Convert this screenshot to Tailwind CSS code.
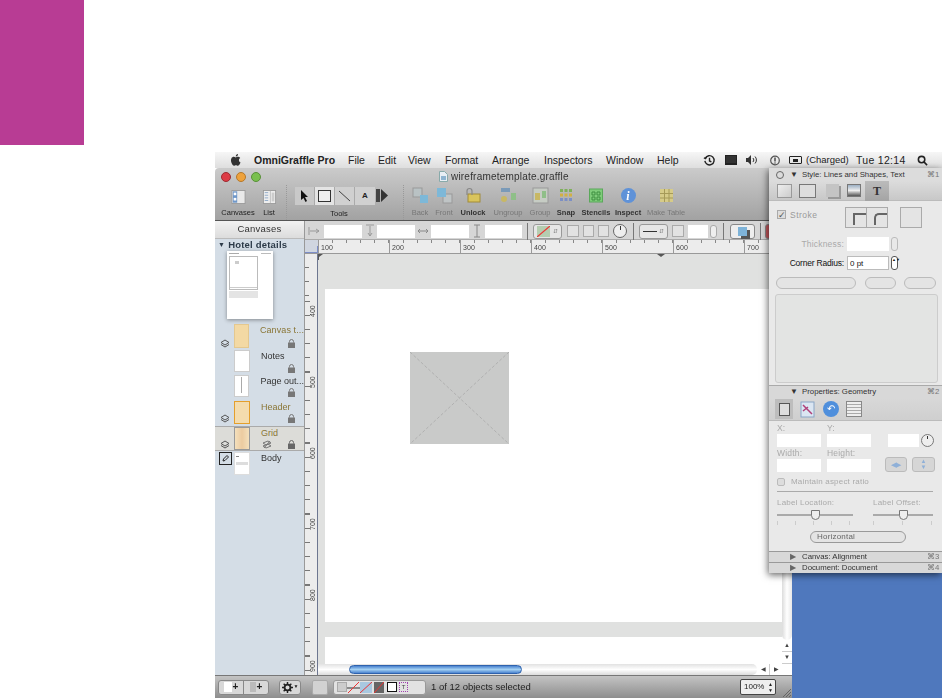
<!DOCTYPE html>
<html lang="en">
<head>
<meta charset="utf-8">
<title>OmniGraffle Pro</title>
<script src="https://cdn.jsdelivr.net/npm/@tailwindcss/browser@4"></script>
</head>
<body class="bg-white overflow-hidden font-['Liberation_Sans',sans-serif] text-[#222]">
<div class="w-[942px] h-[698px] flex flex-col overflow-hidden">
  <div class="w-[84px] h-[145px] shrink-0 bg-[#b83c94]"></div>
  <div class="relative ml-[215px] mt-[7px] w-[727px] h-[546px] flex flex-col blur-[0.35px]">
    <!-- menu bar -->
    <div class="h-[16px] shrink-0 flex items-center bg-gradient-to-b from-[#f6f6f6] to-[#dedede] text-[10.5px] leading-none">
      <svg class="ml-[14px] w-[14px] h-[14px]" viewBox="0 0 24 24" fill="#333"><path d="M17 12.500c0-2.600 2.100-3.800 2.200-3.900-1.200-1.800-3.100-2-3.700-2-1.600-.2-3.100.9-3.900.9s-2-.9-3.300-.9c-1.700 0-3.300 1-4.100 2.500-1.800 3-.5 7.600 1.200 10.100.9 1.200 1.900 2.600 3.200 2.500 1.300 0 1.800-.8 3.300-.8s2 .8 3.300.8c1.400 0 2.300-1.200 3.100-2.500 1-1.400 1.400-2.800 1.400-2.900-.100 0-2.700-1-2.700-3.800zM14.500 4.900c.7-.9 1.200-2 1-3.200-1 0-2.200.7-2.900 1.500-.6.700-1.200 1.900-1 3 1.100.1 2.200-.5 2.900-1.300z"/></svg>
      <span class="ml-[11px] w-[94px] font-bold text-[10.5px]">OmniGraffle Pro</span>
      <span class="w-[30px]">File</span>
      <span class="w-[30px]">Edit</span>
      <span class="w-[37px]">View</span>
      <span class="w-[47px]">Format</span>
      <span class="w-[52px]">Arrange</span>
      <span class="w-[62px]">Inspectors</span>
      <span class="w-[51px]">Window</span>
      <span class="w-[46px]">Help</span>
      <svg class="w-[13px] h-[13px] mr-[9px]" viewBox="0 0 14 14" fill="none" stroke="#222" stroke-width="1.500"><path d="M2.500 4.500A5 5 0 1 1 2 7.500M1 4l1.500 1L4 3.500M7 4v3.500l2 1"/></svg>
      <span class="w-[12px] h-[10px] bg-[#333] border border-[#222] border-b-[2px] mr-[9px]"></span>
      <svg class="w-[11px] h-[10px] mr-[13px]" viewBox="0 0 11 10" fill="#333"><path d="M0 3h2l3-3v10L2 7H0z"/><path d="M7 3a3 3 0 0 1 0 4M9 1.500a5 5 0 0 1 0 7" fill="none" stroke="#333"/></svg>
      <svg class="w-[10px] h-[11px] mr-[9px]" viewBox="0 0 10 11"><circle cx="5" cy="5.500" r="4.300" fill="none" stroke="#555" stroke-width="1.200"/><path d="M5 2.500v4M5 7.500v1" stroke="#333" stroke-width="1.300"/></svg>
      <span class="w-[13px] h-[8px] rounded-[1px] border border-[#222] flex items-center justify-center mr-[4px]"><span class="w-[5px] h-[3px] bg-[#222]"></span></span>
      <span class="text-[9.5px] w-[50px]">(Charged)</span>
      <span class="w-[61px] tracking-[0.3px]">Tue 12:14</span>
      <svg class="w-[11px] h-[11px]" viewBox="0 0 12 12" fill="none" stroke="#222" stroke-width="1.700"><circle cx="5" cy="5" r="3.500"/><path d="M7.500 7.500L11 11"/></svg>
    </div>
    <!-- work area -->
    <div class="flex flex-1 min-h-0">
      <div class="w-[577px] shrink-0 flex flex-col min-h-0">
        <!-- title bar + toolbar -->
        <div class="h-[53px] shrink-0 flex flex-col bg-gradient-to-b from-[#cbcbcb] to-[#a2a2a2] border-b border-[#555] rounded-t-[4px]">
          <div class="h-[17px] shrink-0 flex items-center relative">
            <span class="ml-[6px] w-[10px] h-[10px] rounded-full bg-[#dd3b45] border border-[#9c2a30]"></span>
            <span class="ml-[5px] w-[10px] h-[10px] rounded-full bg-[#eea23c] border border-[#b4772a]"></span>
            <span class="ml-[5px] w-[10px] h-[10px] rounded-full bg-[#7ac04f] border border-[#588f38]"></span>
            <svg class="ml-[178px] w-[9px] h-[11px]" viewBox="0 0 9 11"><path d="M.5.500h5l3 3v7h-8z" fill="#e8eef4" stroke="#8aa"/><path d="M2 5h5v4H2z" fill="#8fb4d0"/></svg>
            <span class="ml-[3px] text-[10px] tracking-[0.2px] text-[#333]">wireframetemplate.graffle</span>
          </div>
          <div class="flex flex-1 pl-[9px] text-[7.500px] leading-none">
            <div class="w-[28px] flex flex-col items-center">
              <svg class="w-[15px] h-[14px] mt-[5px]" viewBox="0 0 16 16"><rect x=".5" y=".5" width="15" height="15" fill="#e9e9e9" stroke="#999"/><rect x="1.500" y="1.500" width="5" height="13" fill="#6f97c8"/><rect x="2.500" y="3" width="3" height="3" fill="#fff"/><rect x="2.500" y="9" width="3" height="3" fill="#fff"/></svg>
              <span class="mt-[5px] whitespace-nowrap">Canvases</span>
            </div>
            <div class="w-[22px] ml-[6px] flex flex-col items-center">
              <svg class="w-[15px] h-[14px] mt-[5px]" viewBox="0 0 15 16"><rect x=".5" y=".5" width="14" height="15" fill="#eee" stroke="#999"/><path d="M2 3h4M2 6h4M2 9h4M2 12h4" stroke="#8aa6c6"/><path d="M8.500 1v14" stroke="#bbb"/><rect x="10" y="3" width="3" height="10" fill="#ccc"/></svg>
              <span class="mt-[5px]">List</span>
            </div>
            <div class="w-px ml-[6px] h-[35px] border-l border-dotted border-[#999]"></div>
            <div class="w-[93px] ml-[8px] flex flex-col">
              <div class="flex h-[19px] mt-[1px] items-center">
                <div class="w-[20px] h-[18px] bg-[#c9c9c9] flex items-center justify-center border-r border-[#aaa]"><svg class="w-[8px] h-[12px]" viewBox="0 0 8 12"><path d="M0 0l7 7H4l2 4-1.500 1L2.500 8 0 10z" fill="#111"/></svg></div>
                <div class="w-[20px] h-[18px] bg-[#e4e4e4] flex items-center justify-center border-r border-[#aaa]"><span class="w-[13px] h-[12px] border border-[#333] bg-[#eee]"></span></div>
                <div class="w-[20px] h-[18px] bg-[#d0d0d0] flex items-center justify-center border-r border-[#aaa]"><svg class="w-[14px] h-[12px]" viewBox="0 0 14 12"><path d="M1 1l11 10" stroke="#444"/></svg></div>
                <div class="w-[20px] h-[18px] bg-[#d0d0d0] flex items-center justify-center font-bold text-[8px]">A</div>
                <svg class="ml-[1px] w-[12px] h-[13px]" viewBox="0 0 12 13"><rect width="4" height="13" fill="#444"/><path d="M5 0l7 6.500-7 6.500z" fill="#333"/></svg>
              </div>
              <span class="mt-[5px] text-center pr-[5px]">Tools</span>
            </div>
            <div class="w-px ml-[15px] h-[35px] border-l border-dotted border-[#999]"></div>
            <div class="w-[32px] flex flex-col items-center text-[#777]">
              <svg class="w-[17px] h-[17px] mt-[2px]" viewBox="0 0 17 17"><rect x="1" y="1" width="9" height="9" fill="#b9c2c4" stroke="#999"/><rect x="8" y="8" width="8" height="8" fill="#7db8d8"/></svg>
              <span class="mt-[5px]">Back</span>
            </div>
            <div class="w-[16px] flex flex-col items-center text-[#777]">
              <svg class="w-[17px] h-[17px] mt-[2px] shrink-0" viewBox="0 0 17 17"><rect x="7" y="7" width="9" height="9" fill="#bfc4c5" stroke="#999"/><rect x="1" y="1" width="9" height="9" fill="#7db8d8"/></svg>
              <span class="mt-[5px] whitespace-nowrap">Front</span>
            </div>
            <div class="w-[42px] flex flex-col items-center font-bold text-[#333]">
              <svg class="w-[15px] h-[17px] mt-[2px]" viewBox="0 0 15 17"><rect x="2" y="7" width="12" height="8" fill="#d9c45c" stroke="#a28c38"/><path d="M1 8V4a2.500 2.500 0 0 1 5 0v4" fill="none" stroke="#888" stroke-width="1.200"/></svg>
              <span class="mt-[5px]">Unlock</span>
            </div>
            <div class="w-[28px] flex flex-col items-center text-[#777]">
              <svg class="w-[17px] h-[17px] mt-[2px] shrink-0" viewBox="0 0 17 17"><rect x="1" y="1" width="9" height="4" fill="#7a9ab8"/><circle cx="4" cy="12" r="3" fill="#c8b864"/><rect x="11" y="6" width="5" height="7" fill="#8fbf88"/></svg>
              <span class="mt-[5px] whitespace-nowrap">Ungroup</span>
            </div>
            <div class="w-[36px] flex flex-col items-center text-[#777]">
              <svg class="w-[17px] h-[17px] mt-[2px]" viewBox="0 0 17 17"><rect x="1" y="1" width="15" height="15" fill="#c6ccc4" stroke="#999"/><rect x="3" y="6" width="5" height="7" fill="#c8b864"/><rect x="10" y="4" width="4" height="7" fill="#8fbf88"/></svg>
              <span class="mt-[5px]">Group</span>
            </div>
            <div class="w-[16px] flex flex-col items-center font-bold text-[#333]">
              <svg class="w-[14px] h-[17px] mt-[2px] shrink-0" viewBox="0 0 14 17"><g fill="#7fb05a"><rect x="1" y="2" width="3" height="3"/><rect x="5.500" y="2" width="3" height="3"/><rect x="10" y="2" width="3" height="3"/></g><g fill="#d2b045"><rect x="1" y="6.500" width="3" height="3"/><rect x="5.500" y="6.500" width="3" height="3"/><rect x="10" y="6.500" width="3" height="3"/></g><g fill="#7c8fc4"><rect x="1" y="11" width="3" height="3"/><rect x="5.500" y="11" width="3" height="3"/><rect x="10" y="11" width="3" height="3"/></g></svg>
              <span class="mt-[5px]">Snap</span>
            </div>
            <div class="w-[44px] flex flex-col items-center font-bold text-[#333]">
              <svg class="w-[14px] h-[17px] mt-[2px]" viewBox="0 0 14 17"><rect x=".5" y="2" width="13" height="13" fill="#7fcc7a" stroke="#5aa85a"/><path d="M3 5h3v3H3zM8 5h3v3H8zM3 10h3v3H3zM8 10h3v3H8z" fill="none" stroke="#3f8f40"/></svg>
              <span class="mt-[5px]">Stencils</span>
            </div>
            <div class="w-[20px] flex flex-col items-center font-bold text-[#333]">
              <div class="w-[15px] h-[15px] mt-[3px] rounded-full bg-[#5f92d8] shrink-0 flex items-center justify-center text-white font-['Liberation_Serif',serif] italic text-[12px]">i</div>
              <span class="mt-[6px] whitespace-nowrap">Inspect</span>
            </div>
            <div class="w-[56px] flex flex-col items-center text-[#777]">
              <svg class="w-[17px] h-[17px] mt-[2px]" viewBox="0 0 17 17"><rect x="2" y="2" width="13" height="13" fill="#d6cb88"/><path d="M2 6.500h13M2 11h13M6.500 2v13M11 2v13" stroke="#a69a58"/></svg>
              <span class="mt-[5px] whitespace-nowrap">Make Table</span>
            </div>
          </div>
        </div>
        <!-- main -->
        <div class="flex flex-1 min-h-0">
          <!-- sidebar -->
          <div class="w-[90px] shrink-0 flex flex-col bg-[#d4dde6] border-r border-[#999]">
            <div class="h-[18px] shrink-0 flex items-center justify-center text-[9.500px] bg-gradient-to-b from-[#f2f2f2] to-[#dcdcdc] border-b border-[#bbb] tracking-[0.2px] text-[#333]">Canvases</div>
            <div class="h-[12px] flex items-center pl-[3px] text-[9.500px] font-bold tracking-[0.2px] text-[#2c3a48]"><span class="text-[7px] mr-[3px]">▼</span>Hotel details</div>
            <div class="ml-[12px] w-[46px] h-[68px] bg-white shadow-[0_1px_4px_#0006] flex flex-col p-[2px]">
              <div class="flex justify-between"><span class="w-[10px] h-px bg-[#aaa]"></span><span class="w-[10px] h-px bg-[#bbb]"></span></div>
              <div class="mt-[2px] border border-[#bbb] w-[29px] h-[34px] flex flex-col"><span class="mt-[4px] ml-[5px] w-[4px] h-[3px] bg-[#ccc]"></span><span class="mt-auto mb-[1px] w-full h-px bg-[#ccc]"></span></div>
              <div class="mt-[1px] w-[29px] h-[7px] bg-[#e4e4e4]"></div>
            </div>
            <div class="relative h-[26px] mt-[5px] pl-[19px] flex">
              <span class="w-[16px] h-[24px] bg-[#f3d9a4] border border-[#e4c88f]"></span>
              <span class="ml-[11px] text-[9px] leading-[13px] text-[#8a7636] whitespace-nowrap tracking-[0.1px]">Canvas t...</span>
              <svg class="absolute left-[5px] top-[15px] w-[10px] h-[9px]" viewBox="0 0 10 9" fill="none" stroke="#555"><path d="M5 1l4 2.500L5 6 1 3.500zM1 5.500L5 8l4-2.500"/></svg>
              <svg class="absolute left-[73px] top-[15px] w-[7px] h-[9px]" viewBox="0 0 7 9" fill="#777"><rect y="3.500" width="7" height="5.500"/><path d="M1.500 3.500V2.500a2 2 0 0 1 4 0v1" fill="none" stroke="#777"/></svg>
            </div>
            <div class="relative h-[23px] pl-[19px] flex">
              <span class="w-[16px] h-[22px] bg-white border border-[#ccc]"></span>
              <span class="ml-[11px] text-[9px] leading-[13px] text-[#333]">Notes</span>
              <svg class="absolute left-[73px] top-[14px] w-[7px] h-[9px]" viewBox="0 0 7 9" fill="#777"><rect y="3.500" width="7" height="5.500"/><path d="M1.500 3.500V2.500a2 2 0 0 1 4 0v1" fill="none" stroke="#777"/></svg>
            </div>
            <div class="relative h-[26px] mt-[2px] pl-[19px] flex">
              <span class="w-[16px] h-[22px] bg-white border border-[#ccc] flex justify-center"><span class="w-px h-[16px] mt-[1px] bg-[#aaa]"></span></span>
              <span class="ml-[11px] text-[9px] leading-[13px] text-[#333] whitespace-nowrap">Page out...</span>
              <svg class="absolute left-[73px] top-[13px] w-[7px] h-[9px]" viewBox="0 0 7 9" fill="#777"><rect y="3.500" width="7" height="5.500"/><path d="M1.500 3.500V2.500a2 2 0 0 1 4 0v1" fill="none" stroke="#777"/></svg>
            </div>
            <div class="relative h-[25px] pl-[19px] flex">
              <span class="w-[16px] h-[23px] bg-[#f4dcae] border border-[#e49f2c]"></span>
              <span class="ml-[11px] text-[9px] leading-[13px] text-[#8a7636]">Header</span>
              <svg class="absolute left-[5px] top-[13px] w-[10px] h-[9px]" viewBox="0 0 10 9" fill="none" stroke="#555"><path d="M5 1l4 2.500L5 6 1 3.500zM1 5.500L5 8l4-2.500"/></svg>
              <svg class="absolute left-[73px] top-[13px] w-[7px] h-[9px]" viewBox="0 0 7 9" fill="#777"><rect y="3.500" width="7" height="5.500"/><path d="M1.500 3.500V2.500a2 2 0 0 1 4 0v1" fill="none" stroke="#777"/></svg>
            </div>
            <div class="relative h-[25px] pl-[19px] flex items-center bg-[#dcdcd8] border-y border-[#aaa]">
              <span class="w-[16px] h-[23px] bg-gradient-to-r from-[#f4e0bc] via-[#eccba0] to-[#f4e0bc] border border-[#999]"></span>
              <span class="ml-[11px] text-[9px] leading-[13px] self-start text-[#8a7636]">Grid</span>
              <svg class="absolute left-[5px] top-[13px] w-[10px] h-[9px]" viewBox="0 0 10 9" fill="none" stroke="#555"><path d="M5 1l4 2.500L5 6 1 3.500zM1 5.500L5 8l4-2.500"/></svg>
              <svg class="absolute left-[47px] top-[13px] w-[10px] h-[9px]" viewBox="0 0 10 9" fill="none" stroke="#777"><path d="M1 3l5-2 3 2-5 2zM1 6l5-2 3 2-5 2zM2 8l6-7"/></svg>
              <svg class="absolute left-[73px] top-[13px] w-[7px] h-[9px]" viewBox="0 0 7 9" fill="#666"><rect y="3.500" width="7" height="5.500"/><path d="M1.500 3.500V2.500a2 2 0 0 1 4 0v1" fill="none" stroke="#666"/></svg>
            </div>
            <div class="relative h-[25px] mt-[1px] pl-[19px] flex">
              <span class="w-[16px] h-[23px] bg-white border border-[#ddd] flex flex-col pt-[3px] px-[1px]"><span class="w-[3px] h-px bg-[#888]"></span><span class="mt-[5px] w-full h-[3px] bg-[#ddd]"></span></span>
              <span class="ml-[11px] text-[9px] leading-[13px] text-[#333]">Body</span>
              <svg class="absolute left-[4px] top-0 w-[13px] h-[13px]" viewBox="0 0 13 13" fill="none" stroke="#222"><rect x=".5" y=".5" width="12" height="12"/><path d="M4 9l.500-2L8 3.500 9.500 5 6 8.500z"/></svg>
            </div>
          </div>
          <!-- canvas column -->
          <div class="flex-1 min-w-0 flex flex-col">
            <!-- format bar -->
            <div class="h-[19px] shrink-0 flex items-center bg-[#d6d6d6] border-b border-[#aaa] pl-[2px] pt-[2px]">
              <svg class="w-[14px] h-[10px] ml-[1px] mr-[2px]" viewBox="0 0 14 10" fill="none" stroke="#999"><path d="M1 1v8M2 5h9M8 3l3 2-3 2"/></svg>
              <span class="w-[38px] h-[13px] bg-white"></span>
              <svg class="w-[10px] h-[14px] mx-[2.500px]" viewBox="0 0 10 14" fill="none" stroke="#999"><path d="M1 1h8M5 2v10M3 9l2 3 2-3"/></svg>
              <span class="w-[38px] h-[13px] bg-white"></span>
              <svg class="w-[12px] h-[8px] mx-[2px]" viewBox="0 0 12 8" fill="none" stroke="#888"><path d="M1 4h10M1 4l2-2M1 4l2 2M11 4L9 2M11 4L9 6"/></svg>
              <span class="w-[38px] h-[13px] bg-white"></span>
              <svg class="w-[10px] h-[14px] mx-[3px]" viewBox="0 0 10 14" fill="none" stroke="#888"><path d="M2 1h6M5 1v12M2 13h6"/></svg>
              <span class="w-[37px] h-[13px] bg-white"></span>
              <span class="w-px h-[17px] ml-[5px] bg-[#777]"></span>
              <span class="ml-[5px] w-[29px] h-[15px] rounded-[3px] border border-[#999] bg-[#e6e6e6] flex items-center pl-[3px] gap-[3px]"><svg class="w-[13px] h-[11px]" viewBox="0 0 13 11"><rect width="13" height="11" fill="#b5cdb0"/><path d="M0 11L13 0" stroke="#e33" stroke-width="1.200"/></svg><span class="text-[6px] text-[#888]">⇵</span></span>
              <span class="ml-[5px] w-[12px] h-[12px] border border-[#aaa] bg-[#e2e2e2]"></span>
              <span class="ml-[4px] w-[11px] h-[12px] border border-[#aaa] bg-[#e2e2e2]"></span>
              <span class="ml-[4px] w-[11px] h-[12px] border border-[#aaa] bg-[#e2e2e2]"></span>
              <span class="ml-[4px] w-[14px] h-[14px] rounded-full border border-[#666] bg-[#eee] flex justify-center"><span class="w-px h-[4px] mt-[1px] bg-[#333]"></span></span>
              <span class="w-px h-[17px] ml-[6px] bg-[#777]"></span>
              <span class="ml-[5px] w-[29px] h-[15px] rounded-[3px] border border-[#999] bg-[#e6e6e6] flex items-center pl-[3px] gap-[2px]"><span class="w-[14px] h-px bg-[#333]"></span><span class="text-[6px] text-[#888]">⇵</span></span>
              <span class="ml-[4px] w-[12px] h-[12px] border border-[#aaa] bg-[#e2e2e2]"></span>
              <span class="ml-[4px] w-[20px] h-[13px] bg-white"></span>
              <span class="ml-[2px] w-[7px] h-[13px] rounded-[3px] border border-[#aaa] bg-[#eee]"></span>
              <span class="w-px h-[17px] ml-[6px] bg-[#777]"></span>
              <span class="ml-[6px] w-[25px] h-[15px] rounded-[3px] border border-[#888] bg-[#eee] flex items-center justify-center"><span class="w-[9px] h-[9px] bg-[#7eb3d8] shadow-[3px_3px_0_#555]"></span></span>
              <span class="w-px h-[17px] ml-[5px] bg-[#777]"></span>
              <span class="ml-[4px] w-[6px] h-[15px] rounded-l-[3px] border border-[#888] bg-[#c8595f]"></span>
            </div>
            <!-- h ruler -->
            <div class="h-[14px] shrink-0 flex bg-[#ececec] border-b border-[#999] overflow-hidden">
              <div class="w-[13px] shrink-0 flex items-end bg-[#d0d6e0]"><span class="w-full h-[7px] border-b border-r border-[#7d8ec8]"></span></div>
              <div class="w-[71px] shrink-0 h-full border-l border-[#999] pl-[2px] text-[7px] leading-[15px] tracking-[0.1px] text-[#444] bg-[repeating-linear-gradient(90deg,transparent_0,transparent_13px,#888_13px,#888_14px)] bg-[length:100%_3px] bg-no-repeat">100</div>
              <div class="w-[71px] shrink-0 h-full border-l border-[#999] pl-[2px] text-[7px] leading-[15px] tracking-[0.1px] text-[#444] bg-[repeating-linear-gradient(90deg,transparent_0,transparent_13px,#888_13px,#888_14px)] bg-[length:100%_3px] bg-no-repeat">200</div>
              <div class="w-[71px] shrink-0 h-full border-l border-[#999] pl-[2px] text-[7px] leading-[15px] tracking-[0.1px] text-[#444] bg-[repeating-linear-gradient(90deg,transparent_0,transparent_13px,#888_13px,#888_14px)] bg-[length:100%_3px] bg-no-repeat">300</div>
              <div class="w-[71px] shrink-0 h-full border-l border-[#999] pl-[2px] text-[7px] leading-[15px] tracking-[0.1px] text-[#444] bg-[repeating-linear-gradient(90deg,transparent_0,transparent_13px,#888_13px,#888_14px)] bg-[length:100%_3px] bg-no-repeat">400</div>
              <div class="w-[71px] shrink-0 h-full border-l border-[#999] pl-[2px] text-[7px] leading-[15px] tracking-[0.1px] text-[#444] bg-[repeating-linear-gradient(90deg,transparent_0,transparent_13px,#888_13px,#888_14px)] bg-[length:100%_3px] bg-no-repeat">500</div>
              <div class="w-[71px] shrink-0 h-full border-l border-[#999] pl-[2px] text-[7px] leading-[15px] tracking-[0.1px] text-[#444] bg-[repeating-linear-gradient(90deg,transparent_0,transparent_13px,#888_13px,#888_14px)] bg-[length:100%_3px] bg-no-repeat">600</div>
              <div class="w-[71px] shrink-0 h-full border-l border-[#999] pl-[2px] text-[7px] leading-[15px] tracking-[0.1px] text-[#444] bg-[repeating-linear-gradient(90deg,transparent_0,transparent_13px,#888_13px,#888_14px)] bg-[length:100%_3px] bg-no-repeat">700</div>
            </div>
            <!-- ruler + canvas -->
            <div class="flex-1 min-h-0 flex">
              <div class="w-[13px] shrink-0 flex flex-col overflow-hidden bg-[#ececec] border-r border-[#6d7690]">
                <div class="h-[47px] shrink-0 bg-[repeating-linear-gradient(180deg,transparent_0,transparent_13px,#777_13px,#777_14px)] bg-[length:4px_100%] bg-no-repeat"></div>
                <div class="h-[71px] shrink-0 bg-[repeating-linear-gradient(180deg,#777_0,#777_1px,transparent_1px,transparent_14px)] bg-[length:5px_100%] bg-no-repeat flex justify-end"><span class="text-[7px] leading-[7px] [writing-mode:vertical-rl] rotate-180 h-[16px] mr-[1px] text-[#444]">400</span></div>
                <div class="h-[71px] shrink-0 bg-[repeating-linear-gradient(180deg,#777_0,#777_1px,transparent_1px,transparent_14px)] bg-[length:5px_100%] bg-no-repeat flex justify-end"><span class="text-[7px] leading-[7px] [writing-mode:vertical-rl] rotate-180 h-[16px] mr-[1px] text-[#444]">500</span></div>
                <div class="h-[71px] shrink-0 bg-[repeating-linear-gradient(180deg,#777_0,#777_1px,transparent_1px,transparent_14px)] bg-[length:5px_100%] bg-no-repeat flex justify-end"><span class="text-[7px] leading-[7px] [writing-mode:vertical-rl] rotate-180 h-[16px] mr-[1px] text-[#444]">600</span></div>
                <div class="h-[71px] shrink-0 bg-[repeating-linear-gradient(180deg,#777_0,#777_1px,transparent_1px,transparent_14px)] bg-[length:5px_100%] bg-no-repeat flex justify-end"><span class="text-[7px] leading-[7px] [writing-mode:vertical-rl] rotate-180 h-[16px] mr-[1px] text-[#444]">700</span></div>
                <div class="h-[71px] shrink-0 bg-[repeating-linear-gradient(180deg,#777_0,#777_1px,transparent_1px,transparent_14px)] bg-[length:5px_100%] bg-no-repeat flex justify-end"><span class="text-[7px] leading-[7px] [writing-mode:vertical-rl] rotate-180 h-[16px] mr-[1px] text-[#444]">800</span></div>
                <div class="h-[71px] shrink-0 bg-[repeating-linear-gradient(180deg,#777_0,#777_1px,transparent_1px,transparent_14px)] bg-[length:5px_100%] bg-no-repeat flex justify-end"><span class="text-[7px] leading-[7px] [writing-mode:vertical-rl] rotate-180 h-[16px] mr-[1px] text-[#444]">900</span></div>
              </div>
              <div class="flex-1 min-w-0 flex flex-col">
                <div class="flex-1 min-h-0 flex">
                  <div class="relative flex-1 min-w-0 bg-[#e0e1e0] pl-[7px] pt-[35px] flex flex-col overflow-hidden">
                    <svg class="absolute left-0 top-0 w-[5px] h-[6px]" viewBox="0 0 5 6" fill="#555"><path d="M0 0h5L1 3v3H0z"/></svg>
                    <svg class="absolute left-[339px] top-0 w-[8px] h-[3px]" viewBox="0 0 8 3" fill="#555"><path d="M0 0h8L4 3z"/></svg>
                    <div class="h-[333px] shrink-0 bg-white pl-[85px] pt-[63px]">
                      <div class="relative w-[99px] h-[92px] bg-[#c9cac9]">
                        <svg class="absolute inset-0 w-full h-full" viewBox="0 0 99 92" fill="none" stroke="#a9aaa9" stroke-dasharray="3 2" stroke-width=".8"><path d="M0 0L99 92M99 0L0 92"/></svg>
                      </div>
                    </div>
                    <div class="h-[15px] shrink-0"></div>
                    <div class="flex-1 bg-white"></div>
                  </div>
                  <div class="w-[10px] shrink-0 flex flex-col bg-white">
                    <div class="flex-1 bg-gradient-to-r from-[#dcdcdc] via-white to-[#e8e8e8] rounded-b-[5px]"></div>
                    <div class="h-[12px] flex items-center justify-center text-[6px] border-b border-[#ccc] text-[#444]">▲</div>
                    <div class="h-[12px] flex items-center justify-center text-[6px] border-b border-[#ccc] text-[#444]">▼</div>
                  </div>
                </div>
                <!-- h scrollbar -->
                <div class="h-[11px] shrink-0 flex bg-white">
                  <div class="w-[439px] shrink-0 pl-[31px] pt-[1px] bg-gradient-to-b from-[#e2e2e2] via-white to-[#dcdcdc] rounded-r-[5px]">
                    <div class="w-[173px] h-[9px] rounded-full border border-[#2e62ad] bg-gradient-to-b from-[#4b83cf] via-[#a3d0f2] to-[#4b83cf]"></div>
                  </div>
                  <div class="w-[25px] shrink-0 flex text-[6px] text-[#444]"><span class="w-[13px] text-center border-r border-[#ccc] leading-[11px]">◀</span><span class="w-[12px] text-center leading-[11px]">▶</span></div>
                  <div class="w-[10px] shrink-0"></div>
                </div>
              </div>
            </div>
          </div>
        </div>
        <!-- status bar -->
        <div class="h-[23px] shrink-0 flex items-center pl-[3px] bg-gradient-to-b from-[#c4c4c4] to-[#8e8e8e] border-t border-[#777]">
          <div class="flex h-[15px] rounded-[3px] border border-[#888] bg-[#d8d8d8]">
            <span class="w-[25px] flex items-center justify-center border-r border-[#888]"><span class="w-[8px] h-[10px] bg-white"></span><span class="text-[10px] font-bold leading-none ml-[1px]">+</span></span>
            <span class="w-[24px] flex items-center justify-center"><span class="w-[6px] h-[10px] bg-[#bbb]"></span><span class="text-[10px] font-bold leading-none ml-[1px]">+</span></span>
          </div>
          <div class="ml-[10px] w-[22px] h-[15px] rounded-[3px] border border-[#888] bg-[#d8d8d8] flex items-center justify-center gap-[1px]"><svg class="w-[11px] h-[11px]" viewBox="0 0 12 12"><circle cx="6" cy="6" r="3.200" fill="none" stroke="#222" stroke-width="2"/><path d="M6 0v3M6 9v3M0 6h3M9 6h3M1.800 1.800l2 2M8.200 8.200l2 2M1.800 10.200l2-2M8.200 3.800l2-2" stroke="#222" stroke-width="1.600"/></svg><span class="text-[5px]">▼</span></div>
          <div class="ml-[11px] w-[16px] h-[15px] rounded-[2px] border border-[#aaa] bg-[#d2d2d2]"></div>
          <div class="ml-[5px] w-[93px] h-[15px] rounded-[3px] border border-[#999] bg-[#e2e2e2] flex items-center pl-[3px]">
            <span class="w-[10px] h-[10px] bg-[#ccc] border border-[#aaa]"></span>
            <svg class="w-[13px] h-[11px]" viewBox="0 0 13 11"><path d="M0 6h13" stroke="#333"/><path d="M1 11L12 0" stroke="#e33"/></svg>
            <svg class="w-[12px] h-[11px]" viewBox="0 0 12 11"><rect width="12" height="11" fill="#a9c8e0"/><path d="M0 11L12 0" stroke="#e33"/></svg>
            <svg class="ml-[2px] w-[10px] h-[11px]" viewBox="0 0 10 11"><rect width="10" height="11" fill="#666"/><path d="M0 11L10 0" stroke="#e33"/></svg>
            <span class="ml-[3px] w-[10px] h-[10px] border border-[#111] bg-white"></span>
            <span class="ml-[2px] w-[9px] h-[10px] border border-dotted border-[#a040b0] flex items-center justify-center text-[6px] leading-none text-[#444]">T</span>
          </div>
          <span class="ml-[5px] w-[309px] shrink-0 whitespace-nowrap text-[9.500px] text-[#222]">1 of 12 objects selected</span>
          <div class="w-[36px] shrink-0 h-[16px] rounded-[2px] border border-[#444] bg-[#eee] flex items-center justify-between pl-[3px] pr-[2px] text-[8px]"><span>100%</span><span class="text-[5px] leading-[6px] flex flex-col"><span>▲</span><span>▼</span></span></div>
          <svg class="ml-[6px] mt-[10px] w-[9px] h-[9px]" viewBox="0 0 9 9" stroke="#666"><path d="M1 9l8-8M4 9l5-5M7 9l2-2"/></svg>
        </div>
      </div>
      <div class="flex-1 bg-[#4f78bd]"></div>
    </div>
    <!-- inspector palette -->
    <div class="absolute left-[554px] top-[16px] w-[173px] h-[405px] bg-[#e9e9e9] flex flex-col shadow-[-1px_2px_7px_#0009] text-[#333]">
      <div class="h-[13px] shrink-0 flex items-center bg-[#dcdcdc] text-[7.800px]">
        <span class="ml-[7px] w-[8px] h-[8px] rounded-full border border-[#666]"></span>
        <span class="ml-[6px] text-[8px] leading-none w-[12px]">▼</span>
        <span class="w-[125px] whitespace-nowrap">Style: Lines and Shapes, Text</span>
        <span class="text-[#777]">⌘1</span>
      </div>
      <div class="h-[20px] shrink-0 flex items-center bg-gradient-to-b from-[#dcdcdc] to-[#c8c8c8] border-b border-[#bbb] pl-[8px]">
        <span class="w-[15px] h-[14px] border border-[#999] bg-gradient-to-br from-[#eee] to-[#ccc]"></span>
        <span class="ml-[7px] w-[17px] h-[14px] border border-[#777] bg-[#ddd]"></span>
        <span class="ml-[10px] w-[13px] h-[13px] bg-[#c4c4c4] shadow-[2px_2px_0_#999]"></span>
        <span class="ml-[8px] w-[14px] h-[13px] border border-[#777] bg-gradient-to-b from-[#9cb0c4] via-[#eee] to-[#555]"></span>
        <span class="ml-[4px] w-[24px] h-[20px] bg-gradient-to-b from-[#bbb] to-[#a4a4a4] flex items-center justify-center font-['Liberation_Serif',serif] font-bold text-[12px] leading-none">T</span>
      </div>
      <div class="h-[184px] shrink-0 flex flex-col bg-[#e9e9e9] text-[8.500px] leading-none">
        <div class="h-[27px] mt-[6px] flex items-start pl-[8px]">
          <span class="mt-[3px] w-[9px] h-[9px] border border-[#aaa] bg-[#ddd] text-[9px] leading-[8px] text-[#555]">✓</span>
          <span class="ml-[4px] mt-[4px] w-[55px] text-[#999] tracking-[0.5px] text-[8.500px]">Stroke</span>
          <span class="w-[22px] h-[21px] border border-[#aaa] bg-[#e4e4e4] flex items-end justify-end"><span class="w-[13px] h-[12px] mb-[2px] border-l-[2px] border-t-[2px] border-[#666]"></span></span>
          <span class="w-[21px] h-[21px] border border-l-0 border-[#aaa] bg-[#e4e4e4] flex items-end justify-end"><span class="w-[13px] h-[12px] mb-[2px] border-l-[2px] border-t-[2px] rounded-tl-[5px] border-[#666]"></span></span>
          <span class="ml-[12px] w-[22px] h-[21px] border border-[#aaa] bg-[#e4e4e4]"></span>
        </div>
        <div class="h-[14px] mt-[3px] flex items-center justify-end pr-[53px] gap-[3px] text-[#aaa]"><span class="tracking-[0.2px]">Thickness:</span><span class="w-[42px] h-[14px] bg-white"></span><span class="ml-[-1px] mr-[-9px] w-[7px] h-[14px] rounded-[3px] border border-[#bbb]"></span></div>
        <div class="h-[14px] mt-[5px] flex items-center justify-end pr-[53px] gap-[3px] text-[#111]"><span class="tracking-[-0.2px]">Corner Radius:</span><span class="w-[42px] h-[14px] bg-white border border-[#bbb] pl-[2px] leading-[13px] text-[8px]">0 pt</span><span class="ml-[-1px] mr-[-9px] w-[7px] h-[14px] rounded-[3px] border border-[#555] bg-white text-[4px] leading-[6px] text-center">▲▼</span></div>
        <div class="h-[12px] mt-[7px] flex pl-[7px]">
          <span class="w-[80px] h-[12px] rounded-full border border-[#bbb] bg-[#e4e4e4]"></span>
          <span class="ml-[9px] w-[31px] h-[12px] rounded-full border border-[#bbb] bg-[#e4e4e4]"></span>
          <span class="ml-[8px] w-[32px] h-[12px] rounded-full border border-[#bbb] bg-[#e4e4e4]"></span>
        </div>
        <div class="mt-[5px] ml-[6px] w-[163px] h-[89px] rounded-[3px] border border-[#ccc] bg-[#e3e4e3]"></div>
      </div>
      <div class="h-[13px] shrink-0 flex items-center bg-[#d8d8d8] border-t border-[#aaa] text-[7.800px] pl-[21px]">
        <span class="w-[12px] leading-none text-[8px]">▼</span><span class="w-[125px] whitespace-nowrap">Properties: Geometry</span><span class="text-[#777]">⌘2</span>
      </div>
      <div class="h-[23px] shrink-0 flex items-center bg-gradient-to-b from-[#d8d8d8] to-[#cfcfcf] border-b border-[#bbb] pl-[6px]">
        <span class="w-[18px] h-[20px] bg-[#bdbdbd] flex items-center justify-center"><span class="w-[11px] h-[13px] border border-[#555] bg-[#ddd]"></span></span>
        <svg class="ml-[7px] w-[16px] h-[17px]" viewBox="0 0 16 17"><rect x="1" y="1" width="13" height="15" fill="#dbe6f2" stroke="#8aa6c6"/><path d="M3 4l9 9M3 10l5-4" stroke="#b0407a" stroke-width="1.500"/></svg>
        <div class="ml-[7px] w-[16px] h-[16px] rounded-full bg-[#4f8fdc] flex items-center justify-center"><span class="text-white text-[10px] leading-none">↶</span></div>
        <span class="ml-[7px] w-[16px] h-[16px] border border-[#888] bg-[repeating-linear-gradient(180deg,#eee_0,#eee_2px,#aaa_2px,#aaa_3px)]"></span>
      </div>
      <div class="h-[130px] shrink-0 flex flex-col pl-[8px] text-[8.500px] leading-none text-[#aaa]">
        <div class="mt-[3px] h-[9px] flex"><span class="w-[50px]">X:</span><span>Y:</span></div>
        <div class="mt-[1px] h-[13px] flex items-center"><span class="w-[44px] h-[13px] bg-white"></span><span class="ml-[6px] w-[44px] h-[13px] bg-white"></span><span class="ml-[17px] w-[31px] h-[13px] bg-white"></span><span class="ml-[2px] w-[13px] h-[13px] rounded-full border border-[#777] bg-[#eee] flex justify-center"><span class="w-px h-[3px] mt-[1px] bg-[#333]"></span></span></div>
        <div class="mt-[2px] h-[9px] flex"><span class="w-[50px] tracking-[0.2px]">Width:</span><span class="tracking-[0.2px]">Height:</span></div>
        <div class="relative mt-[1px] h-[13px] flex items-center"><span class="w-[44px] h-[13px] bg-white"></span><span class="ml-[6px] w-[44px] h-[13px] bg-white"></span><span class="ml-[14px] mt-[-3px] w-[22px] h-[15px] rounded-[3px] border border-[#bbb] bg-[#d6d6d6] text-[#8fb0d8] text-[7px] text-center leading-[13px]">◀▶</span><span class="ml-[5px] mt-[-3px] w-[23px] h-[15px] rounded-[3px] border border-[#bbb] bg-[#d6d6d6] text-[#8fb0d8] text-[6px] text-center leading-[6px]">▲<br>▼</span></div>
        <div class="mt-[5px] h-[10px] flex items-center"><span class="w-[8px] h-[8px] rounded-[2px] border border-[#bbb] bg-[#ddd]"></span><span class="ml-[6px] tracking-[0.2px] text-[8px]">Maintain aspect ratio</span></div>
        <div class="mt-[4px] mr-[9px] h-px bg-[#aaa]"></div>
        <div class="mt-[7px] h-[9px] flex tracking-[0.2px] text-[8px]"><span class="w-[96px]">Label Location:</span><span>Label Offset:</span></div>
        <div class="mt-[1px] h-[11px] flex items-center">
          <span class="relative w-[76px] h-[2px] bg-[#aaa]"><span class="absolute left-[34px] top-[-4px] w-[9px] h-[10px] rounded-b-full border border-[#777] bg-[#eee]"></span></span>
          <span class="relative ml-[20px] w-[60px] h-[2px] bg-[#aaa]"><span class="absolute left-[26px] top-[-4px] w-[9px] h-[10px] rounded-b-full border border-[#777] bg-[#eee]"></span></span>
        </div>
        <div class="mt-[1px] h-[4px] flex"><span class="w-[76px] h-[4px] bg-[repeating-linear-gradient(90deg,#ccc_0,#ccc_1px,transparent_1px,transparent_18px)]"></span><span class="ml-[20px] w-[60px] h-[4px] bg-[repeating-linear-gradient(90deg,#ccc_0,#ccc_1px,transparent_1px,transparent_29px)]"></span></div>
        <div class="mt-[6px] ml-[33px] w-[96px] h-[12px] rounded-full border border-[#999] bg-[#e4e4e4] pl-[6px] text-[#666] text-[8px] leading-[10px] tracking-[0.2px]">Horizontal</div>
      </div>
      <div class="h-[11px] shrink-0 flex items-center bg-[#d8d8d8] border-t border-[#999] text-[7.800px] pl-[21px]">
        <span class="w-[12px] leading-none text-[#666]">▶</span><span class="w-[125px] whitespace-nowrap">Canvas: Alignment</span><span class="text-[#777]">⌘3</span>
      </div>
      <div class="h-[11px] shrink-0 flex items-center bg-[#d8d8d8] border-t border-[#999] text-[7.800px] pl-[21px]">
        <span class="w-[12px] leading-none text-[#666]">▶</span><span class="w-[125px] whitespace-nowrap">Document: Document</span><span class="text-[#777]">⌘4</span>
      </div>
    </div>
  </div>
</div>
</body>
</html>
